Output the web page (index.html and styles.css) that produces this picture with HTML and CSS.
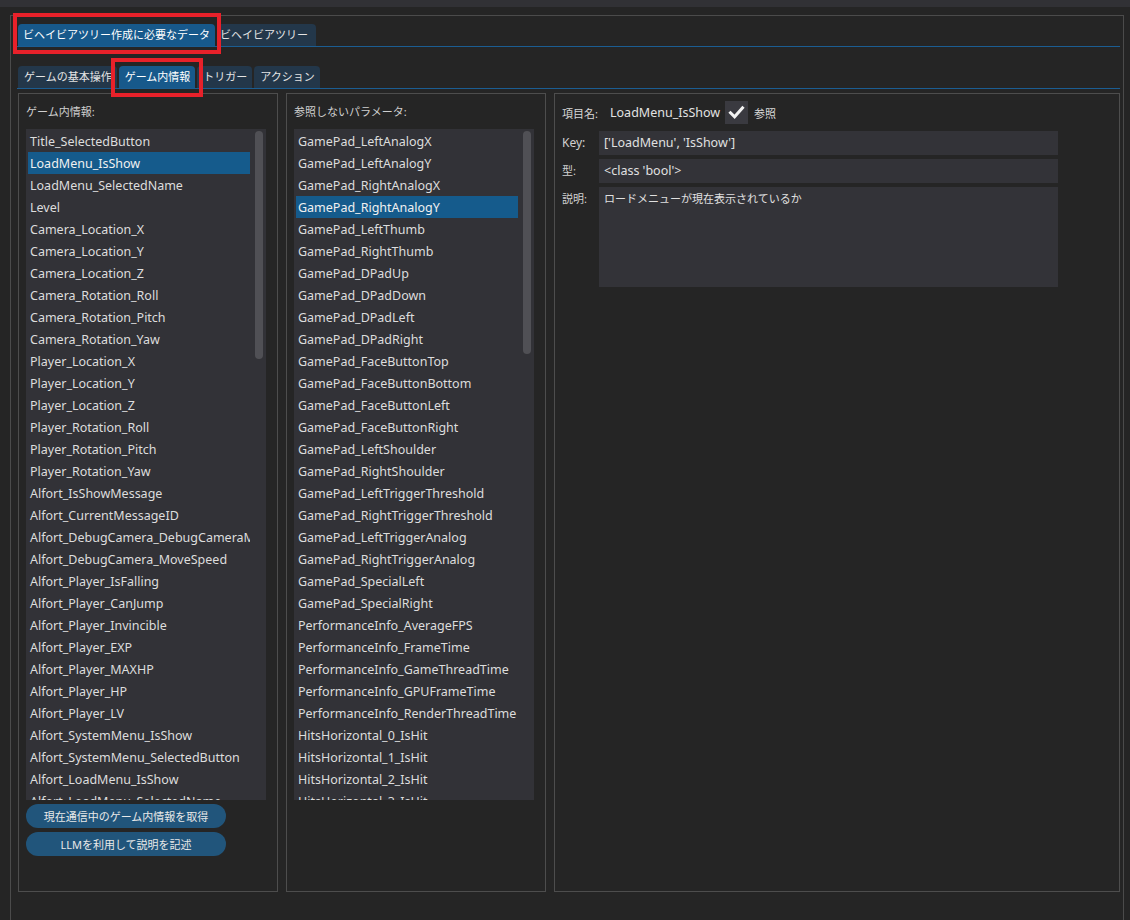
FILE: index.html
```html
<!DOCTYPE html>
<html lang="ja">
<head>
<meta charset="utf-8">
<title>ビヘイビアツリー</title>
<link rel="stylesheet" href="styles.css">
</head>
<body>
<div class="titlebar"></div>
<div class="frame">
  <div class="tabbar top-tabs">
    <div class="tab active">ビヘイビアツリー作成に必要なデータ</div>
    <div class="tab wide">ビヘイビアツリー</div>
  </div>
  <div class="tabbar sub-tabs">
    <div class="tab">ゲームの基本操作</div>
    <div class="tab active">ゲーム内情報</div>
    <div class="tab">トリガー</div>
    <div class="tab">アクション</div>
  </div>
  <div class="panels">
    <section class="panel">
      <div class="panel-label">ゲーム内情報:</div>
      <div class="listbox">
        <ul class="items">
          <li>Title_SelectedButton</li>
          <li class="sel">LoadMenu_IsShow</li>
          <li>LoadMenu_SelectedName</li>
          <li>Level</li>
          <li>Camera_Location_X</li>
          <li>Camera_Location_Y</li>
          <li>Camera_Location_Z</li>
          <li>Camera_Rotation_Roll</li>
          <li>Camera_Rotation_Pitch</li>
          <li>Camera_Rotation_Yaw</li>
          <li>Player_Location_X</li>
          <li>Player_Location_Y</li>
          <li>Player_Location_Z</li>
          <li>Player_Rotation_Roll</li>
          <li>Player_Rotation_Pitch</li>
          <li>Player_Rotation_Yaw</li>
          <li>Alfort_IsShowMessage</li>
          <li>Alfort_CurrentMessageID</li>
          <li>Alfort_DebugCamera_DebugCameraMode</li>
          <li>Alfort_DebugCamera_MoveSpeed</li>
          <li>Alfort_Player_IsFalling</li>
          <li>Alfort_Player_CanJump</li>
          <li>Alfort_Player_Invincible</li>
          <li>Alfort_Player_EXP</li>
          <li>Alfort_Player_MAXHP</li>
          <li>Alfort_Player_HP</li>
          <li>Alfort_Player_LV</li>
          <li>Alfort_SystemMenu_IsShow</li>
          <li>Alfort_SystemMenu_SelectedButton</li>
          <li>Alfort_LoadMenu_IsShow</li>
          <li>Alfort_LoadMenu_SelectedName</li>
        </ul>
        <div class="scrollbar sb1"></div>
      </div>
      <button class="pill">現在通信中のゲーム内情報を取得</button>
      <button class="pill">LLMを利用して説明を記述</button>
    </section>
    <section class="panel">
      <div class="panel-label">参照しないパラメータ:</div>
      <div class="listbox">
        <ul class="items">
          <li>GamePad_LeftAnalogX</li>
          <li>GamePad_LeftAnalogY</li>
          <li>GamePad_RightAnalogX</li>
          <li class="sel">GamePad_RightAnalogY</li>
          <li>GamePad_LeftThumb</li>
          <li>GamePad_RightThumb</li>
          <li>GamePad_DPadUp</li>
          <li>GamePad_DPadDown</li>
          <li>GamePad_DPadLeft</li>
          <li>GamePad_DPadRight</li>
          <li>GamePad_FaceButtonTop</li>
          <li>GamePad_FaceButtonBottom</li>
          <li>GamePad_FaceButtonLeft</li>
          <li>GamePad_FaceButtonRight</li>
          <li>GamePad_LeftShoulder</li>
          <li>GamePad_RightShoulder</li>
          <li>GamePad_LeftTriggerThreshold</li>
          <li>GamePad_RightTriggerThreshold</li>
          <li>GamePad_LeftTriggerAnalog</li>
          <li>GamePad_RightTriggerAnalog</li>
          <li>GamePad_SpecialLeft</li>
          <li>GamePad_SpecialRight</li>
          <li>PerformanceInfo_AverageFPS</li>
          <li>PerformanceInfo_FrameTime</li>
          <li>PerformanceInfo_GameThreadTime</li>
          <li>PerformanceInfo_GPUFrameTime</li>
          <li>PerformanceInfo_RenderThreadTime</li>
          <li>HitsHorizontal_0_IsHit</li>
          <li>HitsHorizontal_1_IsHit</li>
          <li>HitsHorizontal_2_IsHit</li>
          <li>HitsHorizontal_3_IsHit</li>
        </ul>
        <div class="scrollbar sb2"></div>
      </div>
    </section>
    <section class="panel detail">
      <div class="detail-head">
        <span class="dlabel">項目名:</span>
        <span class="latin name">LoadMenu_IsShow</span>
        <span class="checkbox">
          <svg width="23" height="23" viewBox="0 0 23 23"><path d="M5.5 11.8 L9.6 15.8 L17.5 6.8" fill="none" stroke="#f2f2f2" stroke-width="3" stroke-linecap="square"/></svg>
        </span>
        <span class="check-text">参照</span>
      </div>
      <div class="field">
        <span class="flabel latin">Key:</span>
        <div class="input latin">['LoadMenu', 'IsShow']</div>
      </div>
      <div class="field">
        <span class="flabel">型:</span>
        <div class="input latin">&lt;class 'bool'&gt;</div>
      </div>
      <div class="field">
        <span class="flabel">説明:</span>
        <div class="input textarea">ロードメニューが現在表示されているか</div>
      </div>
    </section>
  </div>
</div>
<div class="mark mark1"></div>
<div class="mark mark2"></div>
</body>
</html>
```
FILE: styles.css
```css
* { box-sizing: border-box; }
html, body { margin: 0; padding: 0; }
body {
  background: #252525;
  color: #dedede;
  font-family: "Noto Sans", "Noto Sans CJK JP", sans-serif;
  font-size: 11px;
  width: 1130px;
  height: 920px;
  overflow: hidden;
  position: relative;
}
.latin { font-size: 12.5px; }
.titlebar { height: 7px; background: #313135; }
.frame {
  margin: 8px 0 0 10px;
  width: 1114px;
  height: 905px;
  border: 1px solid #4b4b4b;
  border-bottom: none;
  padding: 8px 3px 0 6px;
}
.tabbar {
  display: flex;
  border-bottom: 1px solid #1b5d92;
  padding-left: 1px;
  height: 23px;
}
.top-tabs { gap: 2px; }
.sub-tabs { gap: 2px; margin-top: 19px; }
.tab {
  height: 22px;
  line-height: 22px;
  padding: 0 5px 0 6px;
  background: #23374a;
  color: #e4e4e4;
  border-radius: 4px 4px 0 0;
  white-space: nowrap;
}
.tab.active { background: #17598b; color: #ffffff; }
.top-tabs .tab { padding: 0 5px 0 5px; }
.top-tabs .tab.wide { padding: 0 8px 0 3px; }
.panels {
  display: flex;
  gap: 8px;
  margin-top: 4px;
  margin-left: 1px;
  height: 799px;
}
.panel {
  width: 260px;
  height: 799px;
  border: 1px solid #4d4d4d;
  padding: 7px 11px 0 7px;
}
.panel-label {
  height: 22px;
  line-height: 22px;
  color: #cfcfcf;
  margin-bottom: 6px;
}
.listbox {
  width: 240px;
  height: 671px;
  background: #323237;
  display: flex;
  padding: 1px 2px;
  overflow: hidden;
}
.items {
  list-style: none;
  margin: 0;
  padding: 0;
  width: 222px;
  flex: 0 0 222px;
}
.items li {
  height: 22px;
  line-height: 23px;
  padding-left: 2px;
  white-space: nowrap;
  overflow: hidden;
  font-size: 12.5px;
  color: #dddddd;
}
.items li.sel { background: #155b8c; color: #f0f0f0; }
.scrollbar {
  width: 8px;
  margin-left: 5px;
  margin-top: 1px;
  background: #505055;
  border-radius: 4px;
  flex: 0 0 8px;
}
.sb1 { height: 228px; }
.sb2 { height: 223px; }
.pill {
  display: block;
  width: 200px;
  height: 24px;
  margin-top: 4px;
  border: none;
  border-radius: 12px;
  background: #21557b;
  color: #e8e8e8;
  font-family: inherit;
  font-size: 11px;
  padding: 0;
}
.detail { flex: 1; width: auto; padding-right: 0; }
.detail-head {
  display: flex;
  align-items: center;
  height: 23px;
  margin-bottom: 7px;
}
.dlabel { width: 48px; color: #d8d8d8; }
.name { color: #e2e2e2; width: 115px; }
.checkbox {
  width: 23px;
  height: 23px;
  background: #3a3a40;
  display: flex;
}
.check-text { margin-left: 6px; color: #d8d8d8; }
.field { display: flex; margin-bottom: 4px; }
.flabel {
  width: 37px;
  line-height: 24px;
  color: #d0d0d0;
}
.flabel.latin { font-size: 12px; }
.input {
  width: 459px;
  height: 24px;
  line-height: 24px;
  background: #333338;
  padding-left: 5px;
  color: #e0e0e0;
}
.textarea {
  height: 100px;
  line-height: 23px;
  font-size: 11px;
  padding-top: 0;
}
.mark {
  position: absolute;
  border: 4px solid #e8212a;
  pointer-events: none;
}
.mark1 { left: 13px; top: 13px; width: 208px; height: 41px; }
.mark2 { left: 111px; top: 58px; width: 92px; height: 39px; }
```
